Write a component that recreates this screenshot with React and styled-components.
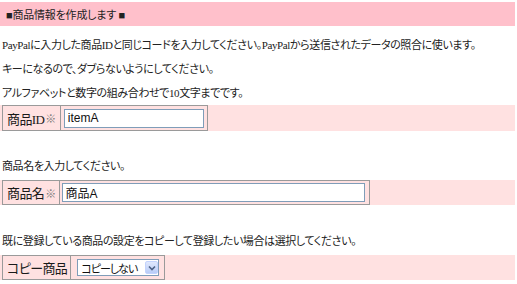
import React from "react";
import styled, { createGlobalStyle } from "styled-components";

const Global = createGlobalStyle`
  html, body { margin: 0; padding: 0; background: #fff; }
  body {
    font-family: "Liberation Serif", "Noto Sans CJK JP", serif;
    font-size: 11px;
    letter-spacing: -0.4px;
    color: #222;
    font-feature-settings: "palt";
  }
`;

const Page = styled.div`
  width: 515px;
  display: flex;
  flex-direction: column;
`;

const Header = styled.div`
  margin-top: 2px;
  height: 24px;
  background: #ffc0cb;
  display: flex;
  align-items: center;
  padding-left: 6px;
  font-size: 11px;
  letter-spacing: -0.2px;
  color: #222;
`;

const Note = styled.p`
  margin: ${(p) => p.$top || 0}px 0 0 2px;
  line-height: 24px;
  height: 24px;
  white-space: nowrap;
`;

const Row = styled.div`
  margin-top: ${(p) => p.$top || 0}px;
  height: ${(p) => p.$h || 25}px;
  background: #ffe1e1;
  padding-left: 2px;
  display: flex;
  align-items: stretch;
`;

const Cells = styled.div`
  display: flex;
  border: 1px solid #9a9a9a;
  box-sizing: border-box;
`;

const Label = styled.div`
  display: flex;
  align-items: center;
  padding: 0 ${(p) => p.$pr || 3}px 0 4px;
  border-right: 1px solid #9a9a9a;
  font-size: 13px;
  letter-spacing: -0.6px;
  color: #1a1a1a;
  white-space: nowrap;
`;

const Mark = styled.span`
  color: #7a7a7a;
  font-size: 11px;
  margin-left: 1px;
`;

const Field = styled.div`
  display: flex;
  align-items: center;
  padding: 0 ${(p) => p.$pr || 4}px 0 ${(p) => p.$pl || 3}px;
`;

const Input = styled.input`
  box-sizing: border-box;
  width: ${(p) => p.$w}px;
  height: 19px;
  border: 1px solid #7f9db9;
  background: #fff;
  padding: 0 3px;
  font-family: "Liberation Sans", "Noto Sans CJK JP", sans-serif;
  font-size: 12px;
  letter-spacing: 0;
  color: #111;
  outline: none;
`;

const SelectWrap = styled.div`
  position: relative;
  width: 82px;
  height: 17px;
`;

const Select = styled.select`
  appearance: none;
  -webkit-appearance: none;
  box-sizing: border-box;
  width: 100%;
  height: 100%;
  border: 1px solid #7f9db9;
  background: #fff;
  padding: 0 0 0 3px;
  font-family: "Noto Sans CJK JP", sans-serif;
  font-size: 11px;
  letter-spacing: -1px;
  color: #111;
  outline: none;
  font-feature-settings: "palt";
`;

const Arrow = styled.span`
  position: absolute;
  right: 1px;
  top: 2px;
  bottom: 2px;
  width: 13px;
  background: linear-gradient(#dfe8fd, #b9ccf7);
  border: 1px solid #c3d3fd;
  box-sizing: border-box;
  border-radius: 2px;
  display: flex;
  align-items: center;
  justify-content: center;
  pointer-events: none;
`;

export default function App() {
  return (
    <>
      <Global />
      <Page>
        <Header>■商品情報を作成します ■</Header>
        <Note $top={7}>
          PayPalに入力した商品IDと同じコードを入力してください。PayPalから送信されたデータの照合に使います。
        </Note>
        <Note>キーになるので、ダブらないようにしてください。</Note>
        <Note>アルファベットと数字の組み合わせで10文字までです。</Note>
        <Row $h={26}>
          <Cells>
            <Label $pr={4}>
              商品ID<Mark>※</Mark>
            </Label>
            <Field $pl={3} $pr={3}>
              <Input $w={140} defaultValue="itemA" />
            </Field>
          </Cells>
        </Row>
        <Note $top={23}>商品名を入力してください。</Note>
        <Row $top={2} $h={25}>
          <Cells>
            <Label $pr={3}>
              商品名<Mark>※</Mark>
            </Label>
            <Field $pl={2} $pr={4}>
              <Input $w={303} defaultValue="商品A" />
            </Field>
          </Cells>
        </Row>
        <Note $top={24}>既に登録している商品の設定をコピーして登録したい場合は選択してください。</Note>
        <Row $top={2} $h={25}>
          <Cells>
            <Label $pr={3}>コピー商品</Label>
            <Field $pl={6} $pr={5}>
              <SelectWrap>
                <Select defaultValue="none">
                  <option value="none">コピーしない</option>
                </Select>
                <Arrow>
                  <svg width="8" height="6" viewBox="0 0 8 6">
                    <path d="M1 1.5 L4 4.5 L7 1.5" fill="none" stroke="#4d6185" strokeWidth="1.6" />
                  </svg>
                </Arrow>
              </SelectWrap>
            </Field>
          </Cells>
        </Row>
      </Page>
    </>
  );
}
